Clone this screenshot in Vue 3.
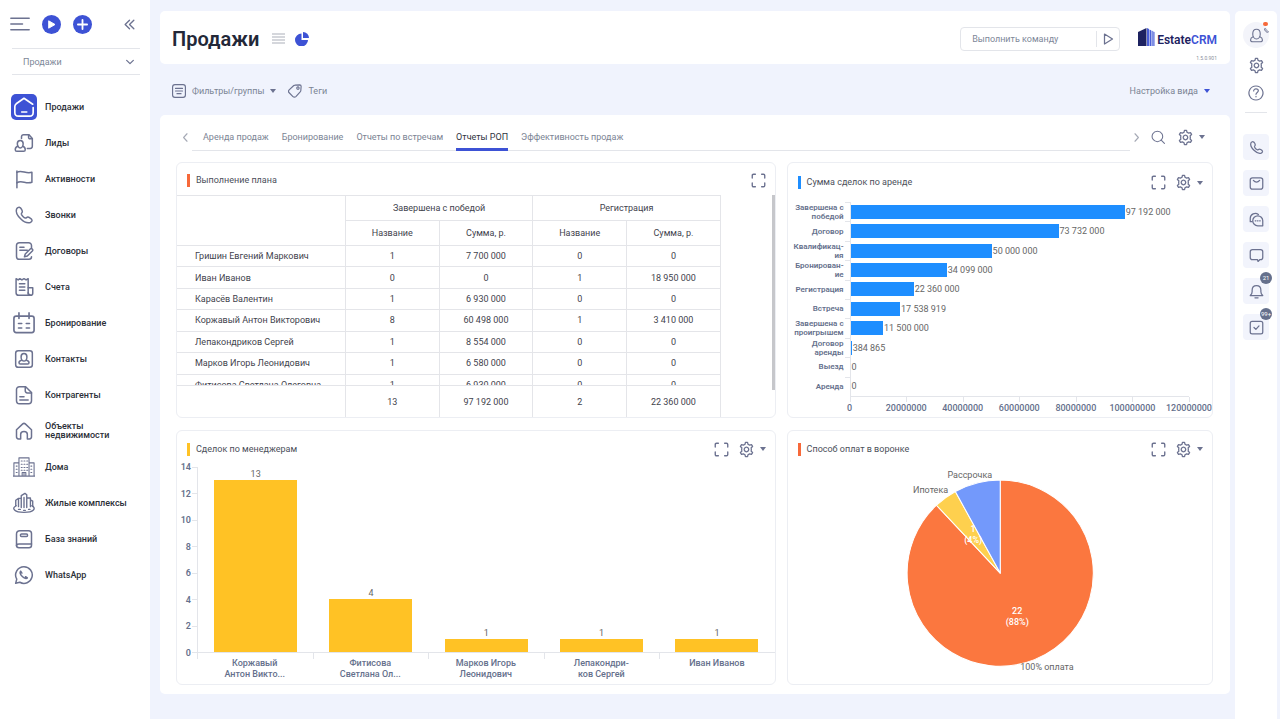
<script setup>
import { h, ref } from 'vue'

const GEAR = 'M9.9 4.6 10.5 2h3l.6 2.6 2.3 1.3 2.6-.8 1.6 2.6-2 1.9c.3 1.6.3 3.2 0 4.8l2 1.9-1.6 2.6-2.6-.8-2.3 1.3-.6 2.6h-3l-.6-2.6-2.3-1.3-2.6.8-1.6-2.6 2-1.9c-.3-1.6-.3-3.2 0-4.8l-2-1.9L5 5.1l2.6.8z'
const PHONE = 'M3 5c-1 3 1.500 8 5 11.500S16.500 22 19.500 21c1.500-.6 2.500-2 2-3.200-.5-1.300-3.500-3.300-5-3.300-1.300 0-1.700 1.500-3 1.200-1.500-.4-4.300-3.200-4.700-4.700-.3-1.300 1.200-1.700 1.200-3 0-1.500-1.500-4.500-3-5C5.500 2.300 3.600 3.500 3 5z'

const paths = {
  home: ['M21.500 9 12 2.500 3.500 8.500C2.500 9.300 2 10.300 2 11.500V18c0 2.500 1.500 4 4 4h12c2.500 0 4-1.500 4-4v-5.500', 'M9.500 17.500h5.500'],
  leads: ['M9 6.500V4.500C9 3 10 2 11.500 2H18l4 4.500V16c0 1.500-1 2.500-2.500 2.500H16', 'M17.500 2v3.500c0 1 .7 1.500 1.500 1.500h3', 'M4 13c0-2.500 1.500-4 3.500-4S11 10.500 11 13s-1.500 5-3.500 5S4 15.500 4 13z', 'M4.600 16C2.500 16.500 1.500 18 1.500 20c0 1.200.8 2 2 2h8c1.200 0 2-.8 2-2 0-2-1-3.500-3.100-4'],
  flag: ['M3.500 22.500V2.500', 'M3.500 4c6-3.500 10.500 2.500 18 0v12c-7.500 2.500-12-3-18 .5'],
  phone: [PHONE],
  contract: ['M21 9V5.500C21 3.500 19.500 2 17.500 2h-11C4.500 2 3 3.500 3 5.500v13C3 20.500 4.500 22 6.500 22H18c1.500 0 3-1 3-3', 'M7 7.500h5M7 11h9', 'M13.500 15.500l6-6c1.500-1.500 4 .7 2.500 2.500l-6 6-3.500 1z'],
  invoice: ['M2.500 2l2.500 1.500L7 2l2.500 1.500L12 2l2.500 1.500L17 2v17c0 2 1 3 3 3H5.500c-2 0-3-1-3-3z', 'M6.500 8h6.500M6.500 12h6.500M6.500 16h6.500', 'M17 13h5.500v6.500c0 1.500-1 2.500-2.500 2.500s-3-1-3-3'],
  calendar: ['M1 7c0-1.500 1-2.500 2.500-2.500h17C22 4.500 23 5.500 23 7v13c0 1.500-1 2.500-2.500 2.500h-17C2 22.500 1 21.500 1 20z', 'M6.500 1v6M17.500 1v6', 'M6 12.500h3.500M14.500 12.500H18M6 17.500h3.500M14.500 17.500H18'],
  contact: ['M5 2h14c2 0 3 1 3 3v14c0 2-1 3-3 3H5c-2 0-3-1-3-3V5c0-2 1-3 3-3z', 'M8.500 9.500c0-2.500 1.500-4 3.500-4s3.500 1.500 3.500 4-1.500 5-3.500 5-3.500-2.500-3.500-5z', 'M9 13.500c-2 .5-3 1.500-3 3 0 1 .7 1.500 1.500 1.500h9c.8 0 1.500-.5 1.500-1.500 0-1.500-1-2.500-3-3'],
  doc: ['M6.500 2H14l7 7v10c0 2-1.500 3.500-3.500 3.500h-11C4.500 22.500 3 21 3 19V5.500C3 3.500 4.500 2 6.500 2z', 'M13.500 2v5c0 1.500.8 2.500 2.500 2.500h5', 'M7 14h5M7 18h10'],
  house: ['M3 10.500l7.500-7c1-.9 2-.9 3 0l7.500 7V19c0 1.700-.8 2.500-2.500 2.500H16V16c0-2-1.500-3.500-4-3.500S8 14 8 16v5.500H5.500C3.800 21.500 3 20.700 3 19z'],
  building: ['M6.500 22V2h11v20M0 22h24M1 22V7.500h5.500M23 22V7.500h-5.500M10 22v-4h4v4M12 18v4', 'M9 5.500h1M12 5.500h1M15 5.500h1M9 9h1M12 9h1M15 9h1M9 12.500h1M12 12.500h1M15 12.500h1M9 15.500h1M12 15.500h1M15 15.500h1M3.500 11h1M3.500 14.500h1M3.500 18h1M19.500 11h1M19.500 14.500h1M19.500 18h1'],
  complex: ['M9 17V4l4-2.500L15 3v14M9 7H6v9M3 15V9l3-2M15 6.500h4V16M19 8.500l2.500 1.500v5.500M12 6v11', 'M3.500 15C.5 16.500 0 18 2 20c3 3 17 3 20 0 2-2 1-4-1.500-5', 'M6 19h2M11.500 20h2M17 19h1.500'],
  book: ['M7 2h10.500C19.500 2 21 3.500 21 5.500V18H6c-2 0-3 1-3 2V6c0-2.500 1.500-4 4-4z', 'M3 19.500C3 21.500 4.500 22.500 6 22.500h12c2 0 3-1 3-3V18', 'M9 6h6c1.700 0 1.700 3 0 3H9C7.300 9 7.300 6 9 6z'],
  whatsapp: ['M12 2a10 10 0 1 1-5 18.700L2 22l1.300-5A10 10 0 0 1 12 2z', 'M8 7.500c-1.300 1.500-.3 4 2 6.300s4.800 3 6 1.700M8 7.500l1.500 2.200M16 15.500l-2.200-1.500'],
  menu: ['M1 5h22M1 12h14M1 19h22'],
  collapse: ['M12 4l-8 8 8 8M20 4l-8 8 8 8'],
  down: ['M4 8l8 8 8-8'],
  left: ['M16 2 7 12l9 10'],
  right: ['M8 2l9 10-9 10'],
  plus: ['M12 2v20M2 12h20'],
  run: ['M5 2l16 10L5 22z'],
  filter: ['M5 1h14c3 0 4 1 4 4v14c0 3-1 4-4 4H5c-3 0-4-1-4-4V5c0-3 1-4 4-4z', 'M6 7.500h12M6 12h12M8.500 16.500h7'],
  tag: ['M12 2 20 1.500c1.500 0 2.500 1 2.500 2.500l-.5 7c0 1-.5 2-1.500 3l-7 7.500c-1.500 1.500-3.500 1.500-5 0L2 15c-1.500-1.500-1.500-3.500 0-5l7.500-7c.7-.6 1.500-1 2.500-1z', 'M17 5a2 2 0 1 0 .1 0z'],
  search: ['M11 2a9 9 0 1 1-.1 0zM17.500 17.500 23 23'],
  gear: [GEAR, 'M12 8.800a3.200 3.200 0 1 1-.1 0z'],
  expand: ['M2 8V4c0-1.300.7-2 2-2h3M17 2h3c1.300 0 2 .7 2 2v4M22 16v4c0 1.300-.7 2-2 2h-3M7 22H4c-1.300 0-2-.7-2-2v-4'],
  user: ['M6 9.500C6 5 8.500 2 12 2s6 3 6 7.500-2.500 8-6 8-6-3.500-6-8z', 'M6.500 14C4 15 2.500 16.500 2.500 19c0 2 1.500 3 3.500 3h12c2 0 3.500-1 3.500-3 0-2.500-1.500-4-4-5'],
  help: ['M12 1.500a10.500 10.500 0 1 1-.1 0z', 'M8.500 9c0-4.500 7-4 7-.3 0 2.500-3.500 2.500-3.500 5.300M12 17v.8'],
  mail: ['M5.500 3h13C21 3 22 4 22 6.500v11c0 2.500-1 3.500-3.500 3.500h-13C3 21 2 20 2 17.500v-11C2 4 3 3 5.500 3z', 'M7 7c3 3.500 7 3.500 10 0'],
  chats: ['M14 6a8 8 0 0 1 8 8v8h-8a8 8 0 1 1 0-16z', 'M5 15.500H2V10a8 8 0 0 1 13-6', 'M10 14h1M13.500 14h1M17 14h1'],
  message: ['M5.500 2.500h13C21 2.500 22 3.500 22 6v9c0 2.500-1 3.500-3.500 3.500h-1l-3 3-1-3h-8C3 18.500 2 17.500 2 15V6c0-2.500 1-3.500 3.500-3.500z'],
  bell: ['M2 18.500h20c-2-1.500-3-3-3-6V10c0-4.500-3-7.500-7-7.500S5 5.500 5 10v2.500c0 3-1 4.500-3 6z', 'M9.500 22h5'],
  task: ['M5 2h14c2 0 3 1 3 3v14c0 2-1 3-3 3H5c-2 0-3-1-3-3V5c0-2 1-3 3-3z', 'M8 12l3 3 5-5.500'],
}

const Icon = (props) =>
  h(
    'svg',
    { viewBox: '0 0 24 24', width: props.size, height: props.size, 'stroke-width': props.stroke || 1.8, 'aria-hidden': 'true' },
    paths[props.name].map((d) => h('path', { d })),
  )
Icon.props = ['name', 'size', 'stroke']

const section = ref('Продажи')
const command = ref('')

const menu = [
  ['home', 'Продажи'],
  ['leads', 'Лиды'],
  ['flag', 'Активности'],
  ['phone', 'Звонки'],
  ['contract', 'Договоры'],
  ['invoice', 'Счета'],
  ['calendar', 'Бронирование'],
  ['contact', 'Контакты'],
  ['doc', 'Контрагенты'],
  ['house', 'Объекты\nнедвижимости'],
  ['building', 'Дома'],
  ['complex', 'Жилые комплексы'],
  ['book', 'База знаний'],
  ['whatsapp', 'WhatsApp'],
]

const tabs = ['Аренда продаж', 'Бронирование', 'Отчеты по встречам', 'Отчеты РОП', 'Эффективность продаж']
const activeTab = ref('Отчеты РОП')

const rows = [
  ['Гришин Евгений Маркович', '1', '7 700 000', '0', '0'],
  ['Иван Иванов', '0', '0', '1', '18 950 000'],
  ['Карасёв Валентин', '1', '6 930 000', '0', '0'],
  ['Коржавый Антон Викторович', '8', '60 498 000', '1', '3 410 000'],
  ['Лепакондриков Сергей', '1', '8 554 000', '0', '0'],
  ['Марков Игорь Леонидович', '1', '6 580 000', '0', '0'],
  ['Фитисова Светлана Олеговна', '1', '6 930 000', '0', '0'],
]
const totals = ['13', '97 192 000', '2', '22 360 000']

const stages = [
  ['Завершена с\nпобедой', 97192000],
  ['Договор', 73732000],
  ['Квалификац-\nия', 50000000],
  ['Бронирован-\nие', 34099000],
  ['Регистрация', 22360000],
  ['Встреча', 17538919],
  ['Завершена с\nпроигрышем', 11500000],
  ['Договор\nаренды', 384865],
  ['Выезд', 0],
  ['Аренда', 0],
]
const stageMax = 120000000
const stageTicks = [0, 1, 2, 3, 4, 5, 6].map((n) => n * 20000000)
const spaced = (n) => String(n).replace(/\B(?=(\d{3})+$)/g, ' ')

const managers = [
  ['Коржавый\nАнтон Викто...', 13],
  ['Фитисова\nСветлана Ол...', 4],
  ['Марков Игорь\nЛеонидович', 1],
  ['Лепакондри-\nков Сергей', 1],
  ['Иван Иванов', 1],
]
const managerTicks = [14, 12, 10, 8, 6, 4, 2, 0]

const rail = [
  ['phone', 'Телефония'],
  ['mail', 'Почта'],
  ['chats', 'Чаты'],
  ['message', 'Сообщения'],
  ['bell', 'Уведомления', '21'],
  ['task', 'Задачи', '99+'],
]

const slice = (from, to) => {
  const point = (p) => {
    const a = p * 2 * Math.PI
    return `${212 + 93 * Math.sin(a)} ${106 - 93 * Math.cos(a)}`
  }
  return `M212 106L${point(from)}A93 93 0 ${to - from > 0.5 ? 1 : 0} 1 ${point(to)}Z`
}
</script>

<template>
  <div class="app">
    <aside class="sidebar">
      <div class="side-top">
        <button class="plain" aria-label="Меню"><Icon name="menu" size="20" /></button>
        <button class="round" aria-label="Запустить">
          <svg viewBox="0 0 19 19" width="19" height="19"><path class="solid" d="M7 6l6 3.500-6 3.500z" /></svg>
        </button>
        <button class="round" aria-label="Добавить"><Icon name="plus" size="11" stroke="4" /></button>
        <button class="plain push" aria-label="Свернуть"><Icon name="collapse" size="13" stroke="2.500" /></button>
      </div>
      <div class="side-select">
        <select v-model="section" aria-label="Раздел">
          <option>Продажи</option>
        </select>
        <Icon name="down" size="10" stroke="3" />
      </div>
      <nav class="menu">
        <a v-for="([icon, label], i) in menu" :key="label" href="#" :class="{ active: i === 0 }">
          <span class="menu-icon"><Icon :name="icon" :size="i === 0 ? 22 : icon === 'building' || icon === 'calendar' || icon === 'complex' ? 22 : 20" :stroke="icon === 'building' ? 1.2 : icon === 'complex' ? 1.5 : 1.8" /></span>
          <span class="menu-label">{{ label }}</span>
        </a>
      </nav>
    </aside>

    <main class="main">
      <header class="header">
        <h1>Продажи</h1>
        <button class="plain list" aria-label="Список">
          <svg viewBox="0 0 13 12" width="13" height="12"><path d="M0 1h13M0 4h13M0 7h13M0 10h13" /></svg>
        </button>
        <button class="plain" aria-label="Диаграммы">
          <svg class="pie-icon" viewBox="0 0 14 14" width="14" height="14"><path d="M6.500 1.500V8H13a6.500 6.500 0 1 1-6.500-6.500z" /><path d="M8 0a6 6 0 0 1 6 6H8z" /></svg>
        </button>
        <form class="command" @submit.prevent>
          <input v-model="command" type="text" placeholder="Выполнить команду" aria-label="Выполнить команду" />
          <button class="plain" aria-label="Выполнить"><Icon name="run" size="12" stroke="2.500" /></button>
        </form>
        <div class="brand">
          <div class="logo">
            <svg viewBox="0 0 17 18" width="17" height="18">
              <path fill="#1d2260" d="M0 4 8.500 0v18H0z" />
              <path fill="#4a5fd8" d="M9 0l2 1v17H9zM11.500 1.500l1.500.8V18h-1.500zM13.500 2.500l1.200.6V18h-1.200zM15.300 3.500l1.200.6V18h-1.200z" />
            </svg>
            <span class="logo-name">Estate<b>CRM</b></span>
          </div>
          <span class="version">1.5.0.901</span>
        </div>
      </header>

      <div class="filters">
        <button class="plain"><Icon name="filter" size="14" stroke="2" />Фильтры/группы<i class="caret"></i></button>
        <button class="plain"><Icon name="tag" size="14" stroke="2" />Теги</button>
        <button class="plain push">Настройка вида<i class="caret blue"></i></button>
      </div>

      <section class="panel">
        <div class="tabbar">
          <button class="plain pale" aria-label="Назад"><Icon name="left" size="9" stroke="3" /></button>
          <nav class="tabs">
            <button v-for="t in tabs" :key="t" class="tab" :class="{ current: t === activeTab }" @click="activeTab = t">{{ t }}</button>
          </nav>
          <button class="plain pale" aria-label="Вперед"><Icon name="right" size="9" stroke="3" /></button>
          <button class="plain search" aria-label="Поиск"><Icon name="search" size="14" /></button>
          <button class="plain gear" aria-label="Настройки"><Icon name="gear" size="17" /><i class="caret"></i></button>
        </div>

        <div class="cards">
          <article class="card">
            <div class="card-head short">
              <h2 class="orange">Выполнение плана</h2>
              <button class="plain" aria-label="Развернуть"><Icon name="expand" size="15" stroke="2.200" /></button>
            </div>
            <div class="table-view">
              <div class="table-scroll">
                <table class="plan">
                  <colgroup><col class="wide" /><col /><col /><col /><col /></colgroup>
                  <thead>
                    <tr>
                      <th rowspan="2"></th>
                      <th colspan="2">Завершена с победой</th>
                      <th colspan="2">Регистрация</th>
                    </tr>
                    <tr><th>Название</th><th>Сумма, р.</th><th>Название</th><th>Сумма, р.</th></tr>
                  </thead>
                  <tbody>
                    <tr v-for="r in rows" :key="r[0]"><td v-for="(c, i) in r" :key="i">{{ c }}</td></tr>
                  </tbody>
                </table>
              </div>
              <table class="plan totals">
                <colgroup><col class="wide" /><col /><col /><col /><col /></colgroup>
                <tbody>
                  <tr><td></td><td v-for="(c, i) in totals" :key="i">{{ c }}</td></tr>
                </tbody>
              </table>
              <div class="thumb"></div>
            </div>
          </article>

          <article class="card">
            <div class="card-head tall">
              <h2 class="azure">Сумма сделок по аренде</h2>
              <button class="plain" aria-label="Развернуть"><Icon name="expand" size="15" stroke="2.200" /></button>
              <button class="plain gear" aria-label="Настройки"><Icon name="gear" size="17" /><i class="caret"></i></button>
            </div>
            <div class="hchart">
              <div v-for="[name, value] in stages" :key="name" class="hrow">
                <span class="hname">{{ name }}</span>
                <div class="htrack">
                  <div class="hbar" :style="{ width: (value / stageMax) * 100 + '%' }"></div>
                  <span class="hvalue">{{ spaced(value) }}</span>
                </div>
              </div>
            </div>
            <div class="haxis"><span v-for="t in stageTicks" :key="t">{{ t }}</span></div>
          </article>

          <article class="card">
            <div class="card-head">
              <h2 class="amber">Сделок по менеджерам</h2>
              <button class="plain" aria-label="Развернуть"><Icon name="expand" size="15" stroke="2.200" /></button>
              <button class="plain gear" aria-label="Настройки"><Icon name="gear" size="17" /><i class="caret"></i></button>
            </div>
            <div class="vchart">
              <div class="vaxis"><span v-for="t in managerTicks" :key="t">{{ t }}</span></div>
              <div class="vplot">
                <div v-for="[name, value] in managers" :key="name" class="vcol">
                  <span class="vvalue">{{ value }}</span>
                  <div class="vbar" :style="{ height: (value / 14) * 100 + '%' }"></div>
                </div>
              </div>
            </div>
            <div class="vnames"><span v-for="[name] in managers" :key="name">{{ name }}</span></div>
          </article>

          <article class="card">
            <div class="card-head">
              <h2 class="orange">Способ оплат в воронке</h2>
              <button class="plain" aria-label="Развернуть"><Icon name="expand" size="15" stroke="2.200" /></button>
              <button class="plain gear" aria-label="Настройки"><Icon name="gear" size="17" /><i class="caret"></i></button>
            </div>
            <svg class="pie" viewBox="0 0 424 216" role="img" aria-label="Способ оплат в воронке">
              <path fill="#fb773f" :d="slice(0, 0.88)" />
              <path fill="#fed04e" :d="slice(0.88, 0.92)" />
              <path fill="#7399fb" :d="slice(0.92, 1)" />
              <g class="outer">
                <text x="204" y="11" text-anchor="end">Рассрочка</text>
                <text x="160" y="26" text-anchor="end">Ипотека</text>
                <text x="232" y="203">100% оплата</text>
              </g>
              <g class="inner" text-anchor="middle">
                <text x="229" y="147">22</text>
                <text x="229" y="158">(88%)</text>
                <text x="185" y="65">1</text>
                <text x="185" y="76">(4%)</text>
              </g>
            </svg>
          </article>
        </div>
      </section>
    </main>

    <aside class="rail">
      <button class="avatar" aria-label="Профиль">
        <Icon name="user" size="15" />
        <i class="dot"></i>
        <svg class="call" viewBox="0 0 24 24" width="5" height="5"><path :d="PHONE" /></svg>
      </button>
      <button class="plain" aria-label="Настройки"><Icon name="gear" size="17" /></button>
      <button class="plain" aria-label="Помощь"><Icon name="help" size="16" /></button>
      <hr />
      <div class="tools">
        <button v-for="[icon, label, count] in rail" :key="icon" class="tool" :aria-label="label">
          <Icon :name="icon" size="15" stroke="2" />
          <span v-if="count" class="badge">{{ count }}</span>
        </button>
      </div>
    </aside>
  </div>
</template>

<style>
body {
  background: #f0f3fd;
}
</style>

<style scoped>
* {
  box-sizing: border-box;
}
.app {
  display: grid;
  grid-template-columns: 150px minmax(0, 1fr) 42px;
  min-height: 100vh;
  padding-right: 3px;
  font-family: Roboto, 'Noto Sans', sans-serif;
  font-size: 9px;
  line-height: 12px;
  color: #555a66;
}
svg {
  display: block;
  flex: none;
  fill: none;
  stroke: #6c7290;
  stroke-linecap: round;
  stroke-linejoin: round;
}
button {
  font: inherit;
  color: inherit;
  padding: 0;
  border: 0;
  background: none;
  cursor: pointer;
}
.plain {
  display: flex;
  align-items: center;
}
.push {
  margin-left: auto;
}
.caret {
  border: 3px solid transparent;
  border-top: 4px solid #6c7290;
  border-bottom: 0;
}
.caret.blue {
  border-top-color: #3d52d5;
}

.sidebar {
  background: #fff;
  padding: 0 10px;
}
.side-top {
  display: flex;
  align-items: center;
  gap: 12px;
  height: 48px;
  padding-right: 4px;
}
.round {
  display: flex;
  align-items: center;
  justify-content: center;
  width: 19px;
  height: 19px;
  border-radius: 50%;
  background: #3d52d5;
}
.round svg {
  stroke: #fff;
}
.solid {
  fill: #fff;
}
.side-select {
  display: flex;
  align-items: center;
  height: 27px;
  padding-right: 5px;
  margin-left: 2px;
  border: solid #e3e5ea;
  border-width: 1px 0;
}
.side-select select {
  flex: 1;
  appearance: none;
  border: 0;
  background: none;
  padding: 0 0 0 11px;
  font: inherit;
  color: #7d8798;
}
.menu {
  padding: 14px 0 0 1px;
}
.menu a {
  display: flex;
  align-items: center;
  gap: 8px;
  height: 36px;
  line-height: 9px;
  font-weight: 500;
  color: #2c2f38;
  text-decoration: none;
}
.menu-icon {
  display: flex;
  align-items: center;
  justify-content: center;
  width: 26px;
  height: 26px;
  border-radius: 5px;
}
.menu-label {
  flex: 1;
  white-space: pre-line;
}
.active .menu-icon {
  background: #3d52d5;
}
.active svg {
  stroke: #fff;
}

.main {
  padding: 11px 5px 24px 10px;
}
.header {
  display: flex;
  align-items: center;
  height: 53px;
  padding: 2px 13px 0 12px;
  background: #fff;
  border-radius: 5px;
}
h1 {
  margin: 0 13px 0 0;
  font-size: 20px;
  line-height: 26px;
  font-weight: 600;
  color: #232838;
}
.list {
  margin-right: 10px;
}
.list svg {
  stroke: #d5d7dc;
  stroke-width: 2;
  stroke-linecap: butt;
}
.pie-icon {
  fill: #3d52d5;
  stroke: none;
}
.command {
  display: flex;
  width: 160px;
  height: 24px;
  margin-left: auto;
  border: 1px solid #e3e5ea;
  border-radius: 4px;
}
.command input {
  flex: 1;
  min-width: 0;
  margin: 3px 0;
  padding: 0 0 0 11px;
  border: 0;
  border-right: 1px solid #e3e5ea;
  background: none;
  font: inherit;
}
.command input::placeholder {
  color: #7d8798;
  opacity: 1;
}
.command .plain {
  padding: 0 5px;
}
.brand {
  align-self: stretch;
  display: flex;
  flex-direction: column;
  align-items: flex-end;
  margin-left: 18px;
  padding-top: 15px;
}
.logo {
  display: flex;
  gap: 2px;
}
.logo svg {
  stroke: none;
}
.logo-name {
  padding-top: 5px;
  font-size: 12px;
  line-height: 14px;
  font-weight: 600;
  color: #1d2260;
}
.logo-name b {
  font-weight: 600;
  color: #3d52d5;
}
.version {
  margin-top: 8px;
  font-size: 5px;
  line-height: 6px;
  color: #8a8f9c;
}

.filters {
  display: flex;
  align-items: center;
  gap: 12px;
  height: 51px;
  padding: 2px 20px 0 12px;
  color: #7b8494;
}
.filters .plain {
  gap: 6px;
}

.panel {
  padding: 5px 17px 9px 16px;
  background: #fff;
  border-radius: 5px;
}
.tabbar {
  display: flex;
  align-items: center;
  height: 34px;
  padding: 0 8px 0 5px;
}
.tabs {
  flex: 1;
  display: flex;
  align-self: stretch;
  gap: 13px;
  margin: 0 2px 3px;
  padding-left: 11px;
  border-bottom: 1px solid #e3e5ea;
}
.tab {
  margin-bottom: -1px;
  padding-top: 5px;
  border-bottom: 3px solid transparent;
  color: #7b8494;
}
.tab.current {
  border-color: #3d52d5;
  color: #30343f;
}
.pale svg {
  stroke: #a5a9b5;
}
.search {
  margin: 0 12px 0 10px;
}
.gear {
  gap: 5px;
}
.cards {
  display: grid;
  grid-template-columns: 599fr 426fr;
  gap: 12px 11px;
  padding-top: 8px;
}
.card {
  min-width: 0;
  min-height: 255px;
  overflow: hidden;
  border: 1px solid #eceef3;
  border-radius: 6px;
}
.card-head {
  display: flex;
  align-items: center;
  gap: 9px;
  height: 36px;
  padding: 0 9px 0 10px;
}
.card-head.short {
  height: 32px;
  padding-top: 2px;
}
.card-head.tall {
  height: 39px;
}
h2 {
  flex: 1;
  margin: 0;
  padding-left: 6px;
  border-left: 3px solid;
  font-size: 9px;
  line-height: 13px;
  font-weight: 400;
  color: #4b4f5a;
}
.orange {
  border-color: #f7693a;
}
.azure {
  border-color: #1e8eff;
}
.amber {
  border-color: #ffc225;
}

.table-view {
  position: relative;
}
.table-scroll {
  height: 190px;
  overflow: hidden;
}
.plan {
  width: 91%;
  height: 201px;
  table-layout: fixed;
  border-collapse: collapse;
}
.wide {
  width: 31%;
}
.plan th,
.plan td {
  padding: 0;
  border: 1px solid #e4e5e9;
  font-weight: 400;
  text-align: center;
  color: #3f434d;
}
.plan th {
  height: 25px;
}
.plan td:first-child {
  padding-left: 18px;
  border-left: 0;
  text-align: left;
}
.plan th[rowspan] {
  border-left: 0;
}
.plan.totals {
  height: 32px;
}
.plan.totals td {
  border-bottom: 0;
}
.thumb {
  position: absolute;
  top: 0;
  right: 0;
  width: 3px;
  height: 195px;
  background: #c6c7cb;
}

.hchart {
  display: flex;
  flex-direction: column;
  height: 194px;
  margin-right: 23px;
}
.hrow {
  flex: 1;
  display: flex;
  align-items: center;
  min-height: 0;
}
.hname {
  width: 62px;
  padding-right: 6px;
  font-size: 8px;
  line-height: 9px;
  font-weight: 600;
  color: #65708c;
  text-align: right;
  white-space: pre;
}
.htrack {
  position: relative;
  flex: 1;
  align-self: stretch;
  display: flex;
  align-items: center;
  border-left: 1px solid #e3e5ea;
}
.htrack::before {
  content: '';
  position: absolute;
  top: 0;
  left: -6px;
  width: 5px;
  height: 1px;
  background: #e3e5ea;
}
.hbar {
  height: 14px;
  background: #1e8eff;
}
.hvalue {
  width: 0;
  padding-left: 1px;
  white-space: nowrap;
  color: #666;
}
.haxis {
  display: flex;
  justify-content: space-between;
  margin: 0 23px 0 62px;
  border-top: 1px solid #e3e5ea;
  font-weight: 500;
  color: #65708c;
}
.haxis span {
  position: relative;
  display: flex;
  justify-content: center;
  width: 0;
  padding-top: 5px;
}
.haxis span::before {
  content: '';
  position: absolute;
  top: 0;
  left: 0;
  width: 1px;
  height: 5px;
  background: #e3e5ea;
}

.vchart {
  display: flex;
  height: 186px;
}
.vaxis {
  display: flex;
  flex-direction: column;
  justify-content: space-between;
  width: 20px;
  font-weight: 600;
  color: #65708c;
}
.vaxis span {
  display: flex;
  align-items: center;
  justify-content: flex-end;
  gap: 1px;
  height: 0;
}
.vaxis span::after {
  content: '';
  width: 5px;
  height: 1px;
  background: #e3e5ea;
}
.vplot {
  flex: 1;
  display: flex;
  border: solid #e3e5ea;
  border-width: 0 0 1px 1px;
}
.vcol {
  flex: 1;
  display: flex;
  flex-direction: column;
  align-items: center;
  justify-content: flex-end;
}
.vvalue {
  color: #666;
}
.vbar {
  flex: none;
  width: 72%;
  background: #ffc225;
}
.vnames {
  display: flex;
  padding-left: 20px;
}
.vnames span {
  position: relative;
  flex: 1;
  padding-top: 5px;
  line-height: 11px;
  font-weight: 500;
  color: #65708c;
  text-align: center;
  white-space: pre;
}
.vnames span::before {
  content: '';
  position: absolute;
  top: 0;
  left: 0;
  width: 1px;
  height: 6px;
  background: #e3e5ea;
}

.pie {
  width: 100%;
  stroke: #fff;
  stroke-width: 1;
}
.pie text {
  stroke: none;
  font-size: 9px;
}
.outer {
  fill: #666;
}
.inner {
  fill: #fff;
  font-weight: 500;
}

.rail {
  display: flex;
  flex-direction: column;
  align-items: center;
  gap: 11px;
  margin-top: 11px;
  padding-top: 11px;
  background: #fff;
  border-radius: 5px 5px 0 0;
}
.avatar {
  position: relative;
  display: flex;
  align-items: center;
  justify-content: center;
  width: 26px;
  height: 26px;
  margin-bottom: -2px;
  border-radius: 50%;
  background: #f3f4fa;
}
.dot {
  position: absolute;
  top: 0;
  right: 1px;
  width: 5px;
  height: 4px;
  border-radius: 2px;
  background: #f7693a;
}
.call {
  position: absolute;
  top: 6px;
  right: 0;
  stroke-width: 4;
}
.rail hr {
  width: 22px;
  margin: 0;
  border: 0;
  border-top: 1px solid #e3e5ea;
}
.tools {
  display: grid;
  gap: 10px;
  padding-top: 10px;
}
.tool {
  position: relative;
  display: flex;
  align-items: center;
  justify-content: center;
  width: 26px;
  height: 26px;
  border-radius: 4px;
  background: #f2f4fc;
}
.badge {
  position: absolute;
  top: -6px;
  right: -3px;
  width: 12px;
  height: 12px;
  border-radius: 50%;
  background: #65708c;
  color: #fff;
  font-size: 6px;
  line-height: 12px;
  text-align: center;
}
</style>
